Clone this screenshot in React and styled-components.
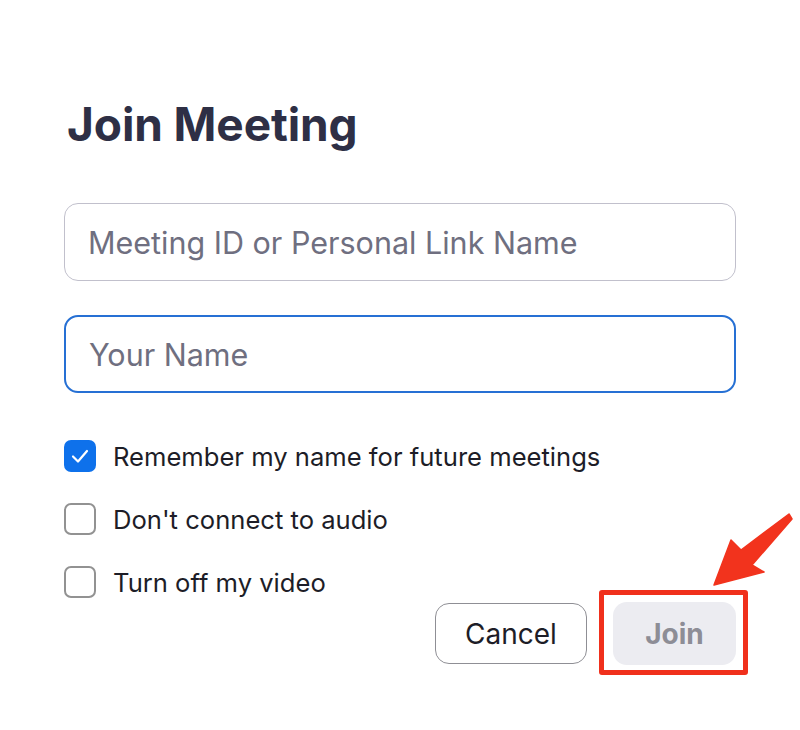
import React from 'react';
import styled, { createGlobalStyle } from 'styled-components';

const GlobalStyle = createGlobalStyle`
  html, body {
    margin: 0;
    padding: 0;
    background: #ffffff;
  }
  body {
    font-family: Inter, "Liberation Sans", sans-serif;
    -webkit-font-smoothing: antialiased;
  }
`

/** Page shell for the join dialog */
export const Page = styled.div`
  width: 800px;
  height: 730px;
  box-sizing: border-box;
  padding: 96px 0 0 64px;
  overflow: hidden;
`
export const Panel = styled.div`
  width: 672px;
  display: flex;
  flex-direction: column;
`
export const Title = styled.h1`
  margin: 0 0 0 3px;
  font-size: 46px;
  line-height: 56px;
  font-weight: 700;
  color: #2e2f45;
  letter-spacing: -0.1px;
`
export const Fields = styled.div`
  display: flex;
  flex-direction: column;
  gap: 34px;
  margin-top: 51px;
`
export const Field = styled.input`
  box-sizing: border-box;
  width: 100%;
  height: 78px;
  padding: 0 0 0 23px;
  border-radius: 14px;
  border: ${props => props.focused ? '2px solid #2670d4' : '1.5px solid #c1c0cc'};
  font-family: Inter, "Liberation Sans", sans-serif;
  font-size: 30.5px;
  color: #23232f;
  background: #fff;
  outline: none;
  &::placeholder {
    color: #6f6f80;
  }
`
export const Options = styled.div`
  display: flex;
  flex-direction: column;
  gap: 31px;
  margin-top: 47px;
`
export const OptionRow = styled.label`
  display: flex;
  align-items: center;
  gap: 17px;
  height: 32px;
  font-size: 25.6px;
  color: #1d1d27;
  cursor: pointer;
`
export const Box = styled.span`
  box-sizing: border-box;
  width: 32px;
  height: 32px;
  flex-shrink: 0;
  border-radius: 7px;
  display: flex;
  align-items: center;
  justify-content: center;
  background: ${props => props.checked ? '#0e71eb' : '#fff'};
  border: ${props => props.checked ? 'none' : '2px solid #929292'};
`
export const Actions = styled.div`
  display: flex;
  justify-content: flex-end;
  align-items: center;
  gap: 26px;
  margin-top: 4px;
`
export const CancelButton = styled.button`
  box-sizing: border-box;
  width: 152px;
  height: 61px;
  border-radius: 14px;
  border: 1.5px solid #8f8f95;
  background: #fff;
  font-family: Inter, "Liberation Sans", sans-serif;
  font-size: 28px;
  color: #1d1d27;
  cursor: pointer;
`
/** red annotation frame drawn round the Join button */
export const Highlight = styled.span`
  position: relative;
  display: flex;
  margin: -12px -12px -10px -14px;
  padding: 7px 7px 5px 9px;
  border: 5px solid #f0301c;
  border-radius: 3px;
`
export const JoinButton = styled.button`
  box-sizing: border-box;
  width: 123px;
  height: 63px;
  border-radius: 14px;
  border: none;
  background: #ececf1;
  font-family: Inter, "Liberation Sans", sans-serif;
  font-size: 28px;
  font-weight: 700;
  color: #8d8d96;
`
export const Arrow = styled.svg`
  position: absolute;
  left: 110px;
  top: -81px;
  width: 80px;
  height: 72px;
  overflow: visible;
`

const Check = () => (
  <svg width="20" height="16" viewBox="0 0 20 16">
    <path d="M3 8.5 L8 13.5 L17 3" fill="none" stroke="#fff" strokeWidth="2.2"
      strokeLinecap="round" strokeLinejoin="round" />
  </svg>
)

const options = [
  { label: 'Remember my name for future meetings', checked: true },
  { label: "Don't connect to audio", checked: false },
  { label: 'Turn off my video', checked: false },
]

export default function App() {
  return (
    <Page>
      <GlobalStyle />
      <Panel>
        <Title>Join Meeting</Title>
        <Fields>
          <Field placeholder="Meeting ID or Personal Link Name" />
          <Field focused placeholder="Your Name" />
        </Fields>
        <Options>
          {options.map(o => (
            <OptionRow key={o.label}>
              <Box checked={o.checked}>{o.checked && <Check />}</Box>
              {o.label}
            </OptionRow>
          ))}
        </Options>
        <Actions>
          <CancelButton>Cancel</CancelButton>
          <Highlight>
            <JoinButton>Join</JoinButton>
            <Arrow viewBox="0 0 80 72">
              <polygon
                points="0,71 17,26 27,36 75,0 78,5 38,51 50,58"
                fill="#f2331d"
                stroke="#f2331d"
                strokeWidth="1.5"
                strokeLinejoin="round"
              />
            </Arrow>
          </Highlight>
        </Actions>
      </Panel>
    </Page>
  )
}
